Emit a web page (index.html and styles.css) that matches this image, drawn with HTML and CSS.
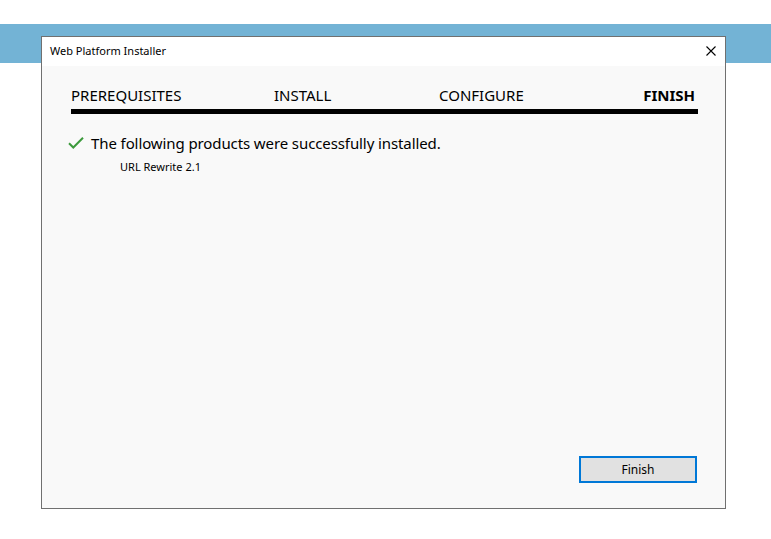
FILE: index.html
```html
<!DOCTYPE html>
<html>
<head>
<meta charset="utf-8">
<link rel="stylesheet" href="styles.css">
</head>
<body>
<div class="dialog">
  <div class="titlebar">
    <span class="title">Web Platform Installer</span>
    <svg class="close" width="10" height="10" viewBox="0 0 10 10"><path d="M0.5 0.5L9.5 9.5M9.5 0.5L0.5 9.5" stroke="#000" stroke-width="1.1" fill="none"/></svg>
  </div>
  <div class="content">
    <div class="steps">
      <span class="step">PREREQUISITES</span>
      <span class="step">INSTALL</span>
      <span class="step">CONFIGURE</span>
      <span class="step current">FINISH</span>
    </div>
    <div class="bar"></div>
    <div class="message">
      <svg class="check" width="16" height="12" viewBox="0 0 16 12"><path d="M1 6.2L5.3 10.5L15 0.8" stroke="#3c9a3c" stroke-width="2" fill="none"/></svg>
      <span>The following products were successfully installed.</span>
    </div>
    <div class="product">URL Rewrite 2.1</div>
    <div class="spacer"></div>
    <div class="actions">
      <button class="btn">Finish</button>
    </div>
  </div>
</div>
</body>
</html>
```
FILE: styles.css
```css
html, body {
  margin: 0;
  padding: 0;
}
body {
  width: 771px;
  height: 539px;
  overflow: hidden;
  background: linear-gradient(to bottom, #ffffff 24px, #73b3d5 24px, #73b3d5 63px, #ffffff 63px);
  font-family: "Noto Sans", "Open Sans", sans-serif;
  color: #000;
  padding-top: 36px;
  box-sizing: border-box;
}
.dialog {
  margin-left: 41px;
  width: 685px;
  height: 473px;
  box-sizing: border-box;
  border: 1px solid #707070;
  background: #f9f9f9;
  display: flex;
  flex-direction: column;
}
.titlebar {
  height: 29px;
  background: #ffffff;
  display: flex;
  align-items: center;
  justify-content: space-between;
  padding: 0 9px 0 8px;
}
.title {
  font-size: 11px;
  line-height: 14px;
  margin-top: -2px;
  color: #000;
}
.close {
  display: block;
  margin-top: -1px;
}
.content {
  flex: 1;
  display: flex;
  flex-direction: column;
  padding: 19px 27px 25px 29px;
}
.steps {
  display: grid;
  grid-template-columns: 203px 165px 1fr auto;
  padding-right: 3px;
  font-size: 15px;
  line-height: 20px;
  color: #000;
}
.step {
  white-space: nowrap;
}
.current {
  font-weight: bold;
}
.bar {
  height: 5px;
  background: #000;
  margin-top: 4px;
}
.message {
  display: flex;
  align-items: center;
  margin-top: 18px;
  font-size: 15px;
  letter-spacing: -0.1px;
  line-height: 22px;
}
.check {
  display: block;
  margin: 0 7px 0 -3px;
}
.product {
  margin-top: 5px;
  margin-left: 49px;
  font-size: 11px;
  line-height: 16px;
}
.spacer {
  flex: 1;
}
.actions {
  display: flex;
  justify-content: flex-end;
  padding-right: 1px;
}
.btn {
  width: 118px;
  height: 27px;
  box-sizing: border-box;
  border: 2px solid #0078d7;
  background: #e1e1e1;
  font-family: "Noto Sans", "Open Sans", sans-serif;
  font-size: 12px;
  color: #000;
  padding: 0;
}
```
